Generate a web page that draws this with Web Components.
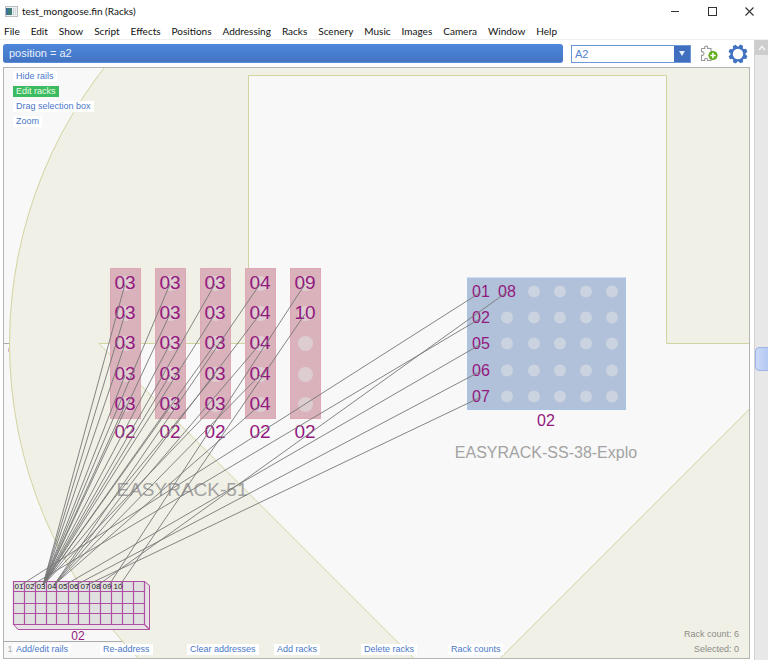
<!DOCTYPE html>
<html lang="en">
<head>
<meta charset="utf-8">
<title>test_mongoose.fin (Racks)</title>
<style>
html, body { margin: 0; height: 100%; background: #fff; }
</style>
</head>
<body>
<rack-window></rack-window>
<script>
const UI = 'Lato, "Open Sans", sans-serif';
const ARIAL = '"Liberation Sans", Arial, sans-serif';

function define(name, html, setup) {
  const template = document.createElement('template');
  template.innerHTML = html;
  customElements.define(name, class extends HTMLElement {
    constructor() {
      super();
      this.attachShadow({ mode: 'open' }).append(template.content.cloneNode(true));
    }
    connectedCallback() { if (setup) setup(this, this.shadowRoot); }
  });
}

define('title-bar', `
<style>
:host { display: flex; align-items: center; height: 22px; font: 10px/14px ${UI}; color: #111; }
.app { margin: 0 4px 0 5px; flex: none; }
h1 { font: inherit; margin: 0; flex: 1; white-space: nowrap; }
button { border: 0; background: none; padding: 0; width: 37px; height: 22px; display: grid; place-items: center; }
</style>
<svg class="app" width="13" height="11" viewBox="0 0 13 11" aria-hidden="true">
  <rect x=".5" y=".5" width="12" height="10" fill="#eef1f2" stroke="#b9bec2"/>
  <rect x="1" y="2" width="6" height="7" fill="#3f7f78"/><rect x="1" y="2" width="2" height="7" fill="#3e6f9c"/>
  <rect x="8" y="2" width="1" height="7" fill="#c7cdd0"/><rect x="10" y="2" width="1" height="7" fill="#d5dadc"/>
</svg>
<h1><slot></slot></h1>
<button aria-label="Minimize"><svg width="9" height="9"><path d="M0 4.5h8" stroke="#333"/></svg></button>
<button aria-label="Maximize"><svg width="9" height="9"><rect x=".5" y=".5" width="8" height="8" fill="none" stroke="#333"/></svg></button>
<button aria-label="Close"><svg width="9" height="9"><path d="M.5 .5l8 8M8.5 .5l-8 8" stroke="#333" stroke-width="1.1"/></svg></button>
`);

define('menu-bar', `
<style>
:host { display: block; border-bottom: 1px solid #f0f0f0; }
nav { display: flex; gap: 11px; height: 17px; padding: 0 4px; align-items: center; }
button { border: 0; background: none; padding: 0; font: 10px/14px ${UI}; color: #111; }
</style>
<nav aria-label="Menu"></nav>
`, (host, root) => {
  root.querySelector('nav').innerHTML = host.getAttribute('items').split(',')
    .map(t => `<button type="button">${t}</button>`).join('');
});

define('command-row', `
<style>
:host { display: flex; align-items: center; gap: 8px; height: 19px; font: 11px/14px ${ARIAL}; }
.cmd { flex: 1; min-width: 0; box-sizing: border-box; height: 19px; padding: 0 6px; border: 0; border-radius: 3px;
  border-bottom: 1px solid #5a8edc; color: #e8f0fc; font: inherit; background: linear-gradient(#4f87db, #4374c2); outline: 0; }
.pick { display: flex; position: relative; width: 120px; height: 18px; box-sizing: border-box; border: 1px solid #6d97d8; background: #fff; }
select { appearance: none; flex: 1; border: 0; padding: 0 20px 0 3px; background: none; color: #5583cd; font: inherit; outline: 0; }
.pick svg { position: absolute; right: 0; top: 0; pointer-events: none; }
button { border: 0; background: none; padding: 0; display: block; height: 20px; }
button svg { display: block; }
.icons { display: flex; gap: 10px; padding: 0 2px 0 1px; }
</style>
<input class="cmd" type="text" aria-label="Command" value="position = a2">
<div class="pick">
  <select aria-label="Position"><option>A2</option></select>
  <svg width="16" height="16" viewBox="0 0 16 16" aria-hidden="true"><rect width="16" height="16" fill="#3f6fbe"/><path d="M5 5h6L8 10z" fill="#e6effc"/></svg>
</div>
<div class="icons">
<button type="button" aria-label="Add plugin"><svg width="18" height="20" viewBox="0 0 18 20">
  <path d="M1.5 4.5H4.8C3.8 1.2 8.6 1.2 7.6 4.5H11v3.300c3-.8 3.300 1.500 3 2.500M1.500 4.500v3.200c3.300-.8 3.300 4.500 0 3.500v5.300h3.300c-1 -3 3.500-3 2.800 0H11v-2" fill="none" stroke="#999" stroke-width="1.100"/>
  <circle cx="13" cy="11.500" r="4.600" fill="#62ad18"/><path d="M13 8.800v5.400M10.300 11.500h5.400" stroke="#fff" stroke-width="1.500"/>
</svg></button>
<button type="button" aria-label="Settings"><svg width="20" height="20" viewBox="-10 -10 20 20">
  <g id="gear" fill="#4272c2"></g><circle r="6.400" fill="none" stroke="#4272c2" stroke-width="2.400"/>
</svg></button>
</div>
`, (host, root) => {
  let s = '';
  for (let i = 0; i < 8; i++) s += `<path d="M-2.400 -6.500L-1.600 -9.500H1.600L2.400 -6.500z" transform="rotate(${i * 45 + 22})"/>`;
  root.querySelector('#gear').innerHTML = s;
});

define('tool-chip', `
<style>
:host { display: block; }
button { display: block; border: 0; margin: 0; padding: 0 3px; height: 11px; background: #fff; color: #4a78c8; font: 9px/11px ${ARIAL}; white-space: nowrap; }
:host([active]) button { background: #3dbb60; color: #e8fbe8; }
</style>
<button type="button"><slot></slot></button>
`);

define('rack-plan', `
<style>
:host { display: block; width: 100%; height: 100%; }
svg { display: block; width: 100%; height: 100%; font-family: ${ARIAL}; }
</style>
<svg viewBox="4 68 745 590" preserveAspectRatio="xMidYMid slice" role="img" aria-label="Rack layout"></svg>
`, (host, root) => {
  const text = (x, y, size, t, fill = '#93187f', anchor = 'middle') =>
    `<text x="${x}" y="${y}" font-size="${size}" fill="${fill}" text-anchor="${anchor}">${t}</text>`;
  let base = '', over = '', wires = '';
  const rail = n => 21 + (n - 1) * 11;
  const wire = (x, y, n) => { wires += `M${x} ${y}L${rail(n)} 585`; };

  base += '<path d="M4 343.500H12M4 641.500H130" stroke="#aaa"/>';
  base += '<circle cx="458.500" cy="343.500" r="449" fill="#f0f0e6" stroke="#d3d3a0"/>';
  base += '<rect x="8" y="348" width="1" height="4" fill="#d9b8d0"/>';
  base += '<path d="M700 60H760V343H700z" fill="#f0f0e6"/><path d="M760 398V670H490z" fill="#f0f0e6"/>';
  base += '<path d="M248.500 75.500H666.500V343.500H760V398.500L488.500 670H425.500L99 343.500H248.500z" fill="#f8f8f8" stroke="#d3d3a0"/>';

  const rows = [283, 313, 343, 374, 404];
  const columns = [[3,3,3,3,3], [3,3,3,3,3], [3,3,3,3,3], [4,4,4,4,4], [9,10]];
  columns.forEach((cells, c) => {
    const cx = 125 + c * 45;
    base += `<rect x="${cx - 14.5}" y="268.500" width="30" height="150" fill="#dab2bb" stroke="#dfa8b4"/>`;
    rows.forEach((y, r) => {
      base += `<circle cx="${cx + .5}" cy="${y + .5}" r="7.500" fill="#ddcdd1"/>`;
      if (cells[r]) { over += text(cx, y + 6, 19, String(cells[r]).padStart(2, '0')); wire(cx, y + 1, cells[r]); }
    });
    over += text(cx, 438, 19, '02');
  });
  over += text(182, 496, 19, 'EASYRACK-51', '#a3a3a3');

  base += '<rect x="467.500" y="278" width="158" height="131.500" fill="#b1c1d9" stroke="#a9c4e4"/>';
  const left = [1, 2, 5, 6, 7];
  [291, 317, 343, 370, 396].forEach((y, r) => {
    [481, 507, 534, 560, 586, 612].forEach((x, c) => {
      const n = c === 0 ? left[r] : (c === 1 && r === 0 ? 8 : 0);
      if (n) { over += text(x, y + 6, 16, '0' + n); wire(x, y + 1, n); }
      else base += `<circle cx="${x}" cy="${y + .5}" r="6" fill="#cad3df"/>`;
    });
  });
  over += text(546, 426, 16, '02') + text(546, 458, 16, 'EASYRACK-SS-38-Explo', '#a3a3a3');

  let grid = '<path d="M13.500 581.500H144.500L149.500 585.500V629.500H18L13.500 624.500z" fill="#e6e2e5" stroke="#ae4fa3"/>';
  grid += '<path d="M13.500 581.500H144.500V624.500H13.500z" fill="#e0e0e0"/><path d="';
  [13.5, 24.5, 35.5, 46.5, 56.5, 68.5, 78.5, 89.5, 100.5, 111.5, 122.5, 133.5, 144.5].forEach(x => grid += `M${x} 581V625`);
  [581.5, 591.5, 603.5, 613.5, 624.5].forEach(y => grid += `M13 ${y}H145`);
  grid += 'M144.500 624.500l5 5" fill="none" stroke="#ae4fa3" stroke-width="1.200"/>';
  let labels = '';
  for (let n = 1; n <= 10; n++) labels += text(8 + n * 11, 589, 8, String(n).padStart(2, '0'), '#222');
  labels += text(78, 640, 12, '02') + text(10, 652, 9, '1', '#aaa');

  root.querySelector('svg').innerHTML = base + grid + over +
    `<path d="${wires}" fill="none" stroke="#777" stroke-width=".9"/>` + labels;
});

define('rack-stage', `
<style>
:host { display: block; position: relative; border: 1px solid #b3b6b0; background: #f8f8f8; overflow: hidden; }
rack-plan { position: absolute; inset: 0; }
.modes { position: absolute; left: 9px; top: 3px; display: flex; flex-direction: column; align-items: flex-start; gap: 4px; }
.actions { position: absolute; left: 9px; bottom: 3px; display: grid; grid-template-columns: repeat(6, 87px); justify-items: start; }
.stats { position: absolute; right: 10px; bottom: 1px; text-align: right; font: 9px/15px ${ARIAL}; color: #8c8c88; }
p { margin: 0; }
</style>
<rack-plan></rack-plan>
<div class="modes">
  <tool-chip>Hide rails</tool-chip><tool-chip active>Edit racks</tool-chip>
  <tool-chip>Drag selection box</tool-chip><tool-chip>Zoom</tool-chip>
</div>
<div class="actions">
  <tool-chip>Add/edit rails</tool-chip><tool-chip>Re-address</tool-chip><tool-chip>Clear addresses</tool-chip>
  <tool-chip>Add racks</tool-chip><tool-chip>Delete racks</tool-chip><tool-chip>Rack counts</tool-chip>
</div>
<div class="stats"><p>Rack count: 6</p><p>Selected: 0</p></div>
`);

define('scroll-rail', `
<style>
:host { display: flex; flex-direction: column; width: 13px; flex: none; background: #e8e8e8; border-left: 1px solid #d2d2d2; overflow: hidden; }
button { border: 0; padding: 0; height: 15px; background: #cdcdcd; flex: none; display: grid; place-items: center; }
.track { flex: 1; display: flex; flex-direction: column; }
.track::before { content: ""; flex: 292; }
.track::after { content: ""; flex: 289; }
.thumb { height: 24px; width: 18px; box-sizing: border-box; border: 1px solid #9db4e4; border-radius: 4px; background: linear-gradient(90deg, #cbd9f8, #aac2f2); }
</style>
<button type="button" aria-label="Scroll up"><svg width="8" height="6"><path d="M1 5l3-3.500 3 3.500" fill="none" stroke="#f4f4f4" stroke-width="1.500"/></svg></button>
<div class="track"><div class="thumb"></div></div>
`);

define('rack-window', `
<style>
:host { display: flex; flex-direction: column; height: 100vh; background: #fff; }
.body { flex: 1; display: flex; min-height: 0; }
main { flex: 1; min-width: 0; display: flex; flex-direction: column; gap: 4px; padding: 4px 4px 1px 3px; }
rack-stage { flex: 1; }
</style>
<title-bar>test_mongoose.fin (Racks)</title-bar>
<menu-bar items="File,Edit,Show,Script,Effects,Positions,Addressing,Racks,Scenery,Music,Images,Camera,Window,Help"></menu-bar>
<div class="body">
  <main><command-row></command-row><rack-stage></rack-stage></main>
  <scroll-rail></scroll-rail>
</div>
`);
</script>
</body>
</html>
